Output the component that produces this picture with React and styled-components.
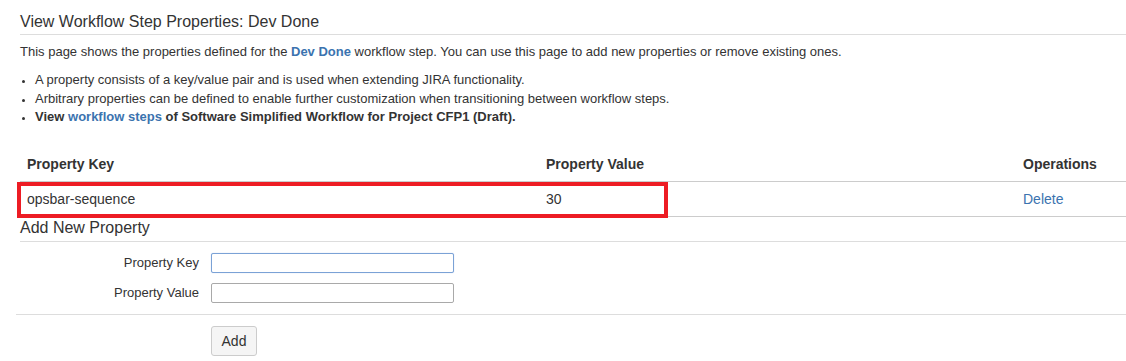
import styled, { createGlobalStyle } from "styled-components";

const GlobalStyle = createGlobalStyle`
  html, body {
    margin: 0;
    padding: 0;
    background: #ffffff;
    overflow: hidden;
  }
  body {
    font-family: "Liberation Sans", Arial, sans-serif;
    color: #333333;
  }
`;

const properties = [{ key: "opsbar-sequence", value: "30" }];

export default function App() {
  return (
    <>
      <GlobalStyle />
      <Page>
        <Title>View Workflow Step Properties: Dev Done</Title>
        <Description>
          This page shows the properties defined for the <Link href="#">Dev Done</Link> workflow
          step. You can use this page to add new properties or remove existing ones.
        </Description>
        <Notes>
          <li>A property consists of a key/value pair and is used when extending JIRA functionality.</li>
          <li>Arbitrary properties can be defined to enable further customization when transitioning between workflow steps.</li>
          <li>
            <strong>
              View <Link href="#">workflow steps</Link> of Software Simplified Workflow for Project CFP1 (Draft).
            </strong>
          </li>
        </Notes>

        <TableWrap>
          <Table>
            <colgroup>
              <col style={{ width: 519 }} />
              <col style={{ width: 477 }} />
              <col />
            </colgroup>
            <thead>
              <tr>
                <Th>Property Key</Th>
                <Th>Property Value</Th>
                <Th>Operations</Th>
              </tr>
            </thead>
            <tbody>
              {properties.map((p) => (
                <tr key={p.key}>
                  <Td>{p.key}</Td>
                  <Td>{p.value}</Td>
                  <Td>
                    <ActionLink href="#">Delete</ActionLink>
                  </Td>
                </tr>
              ))}
            </tbody>
          </Table>
          <Highlight />
        </TableWrap>

        <SectionTitle>Add New Property</SectionTitle>
        <Form onSubmit={(e) => e.preventDefault()}>
          <FieldRow $first>
            <Label htmlFor="prop-key">Property Key</Label>
            <Input id="prop-key" type="text" $focused />
          </FieldRow>
          <FieldRow>
            <Label htmlFor="prop-value">Property Value</Label>
            <Input id="prop-value" type="text" />
          </FieldRow>
          <Buttons>
            <Button type="submit">Add</Button>
          </Buttons>
        </Form>
      </Page>
    </>
  );
}

const Page = styled.div`
  padding: 12px 0 0 20px;
  width: 1106px;
`;

const Title = styled.h3`
  margin: 0;
  font-size: 16px;
  font-weight: normal;
  line-height: 20px;
  padding-bottom: 2px;
  border-bottom: 1px solid #dddddd;
  color: #333333;
`;

const Description = styled.p`
  margin: 7px 0 0;
  font-size: 13px;
  line-height: 20px;
`;

const Link = styled.a`
  color: #3b73af;
  font-weight: bold;
  text-decoration: none;
`;

const Notes = styled.ul`
  margin: 9px 0 0;
  padding-left: 15px;
  font-size: 13px;
  line-height: 18.5px;
  li::marker {
    font-size: 11px;
  }
`;

const TableWrap = styled.div`
  position: relative;
  margin-top: 20px;
`;

const Table = styled.table`
  width: 100%;
  border-collapse: collapse;
  table-layout: fixed;
  font-size: 14px;
  line-height: 20px;
`;

const Th = styled.th`
  text-align: left;
  font-weight: bold;
  padding: 7px;
  border-bottom: 1px solid #cccccc;
  color: #333333;
`;

const Td = styled.td`
  padding: 7px;
  border-bottom: 1px solid #cccccc;
`;

const ActionLink = styled.a`
  color: #3b73af;
  text-decoration: none;
`;

const Highlight = styled.div`
  position: absolute;
  top: 35px;
  left: -3px;
  width: 651px;
  height: 36px;
  box-sizing: border-box;
  border: 4px solid #ed1c24;
  pointer-events: none;
`;

const SectionTitle = styled.h3`
  margin: 1px 0 0;
  font-size: 16px;
  font-weight: normal;
  line-height: 20px;
  padding-bottom: 3px;
  border-bottom: 1px solid #dddddd;
`;

const Form = styled.form`
  margin: 0;
`;

const FieldRow = styled.div`
  display: flex;
  align-items: center;
  gap: 12px;
  margin-top: ${(p) => (p.$first ? "11px" : "10px")};
`;

const Label = styled.label`
  width: 179px;
  text-align: right;
  font-size: 13px;
  line-height: 20px;
  color: #333333;
`;

const Input = styled.input`
  box-sizing: border-box;
  width: 243px;
  height: 20px;
  margin: 0;
  padding: 2px 4px;
  font-family: inherit;
  font-size: 13px;
  background: #ffffff;
  border: 1px solid ${(p) => (p.$focused ? "#7ba2d6" : "#a9a9a9")};
  border-radius: 2px;
  box-shadow: ${(p) => (p.$focused ? "0 0 1px 0 #a8c4ea" : "none")};
  outline: none;
`;

const Buttons = styled.div`
  margin: 11px 0 0 -4px;
  padding: 11px 0 0 195px;
  border-top: 1px solid #dddddd;
`;

const Button = styled.button`
  box-sizing: border-box;
  height: 30px;
  width: 46px;
  padding: 0;
  font-family: inherit;
  font-size: 14px;
  color: #333333;
  background: #f5f5f5;
  border: 1px solid #cccccc;
  border-radius: 3px;
`;
